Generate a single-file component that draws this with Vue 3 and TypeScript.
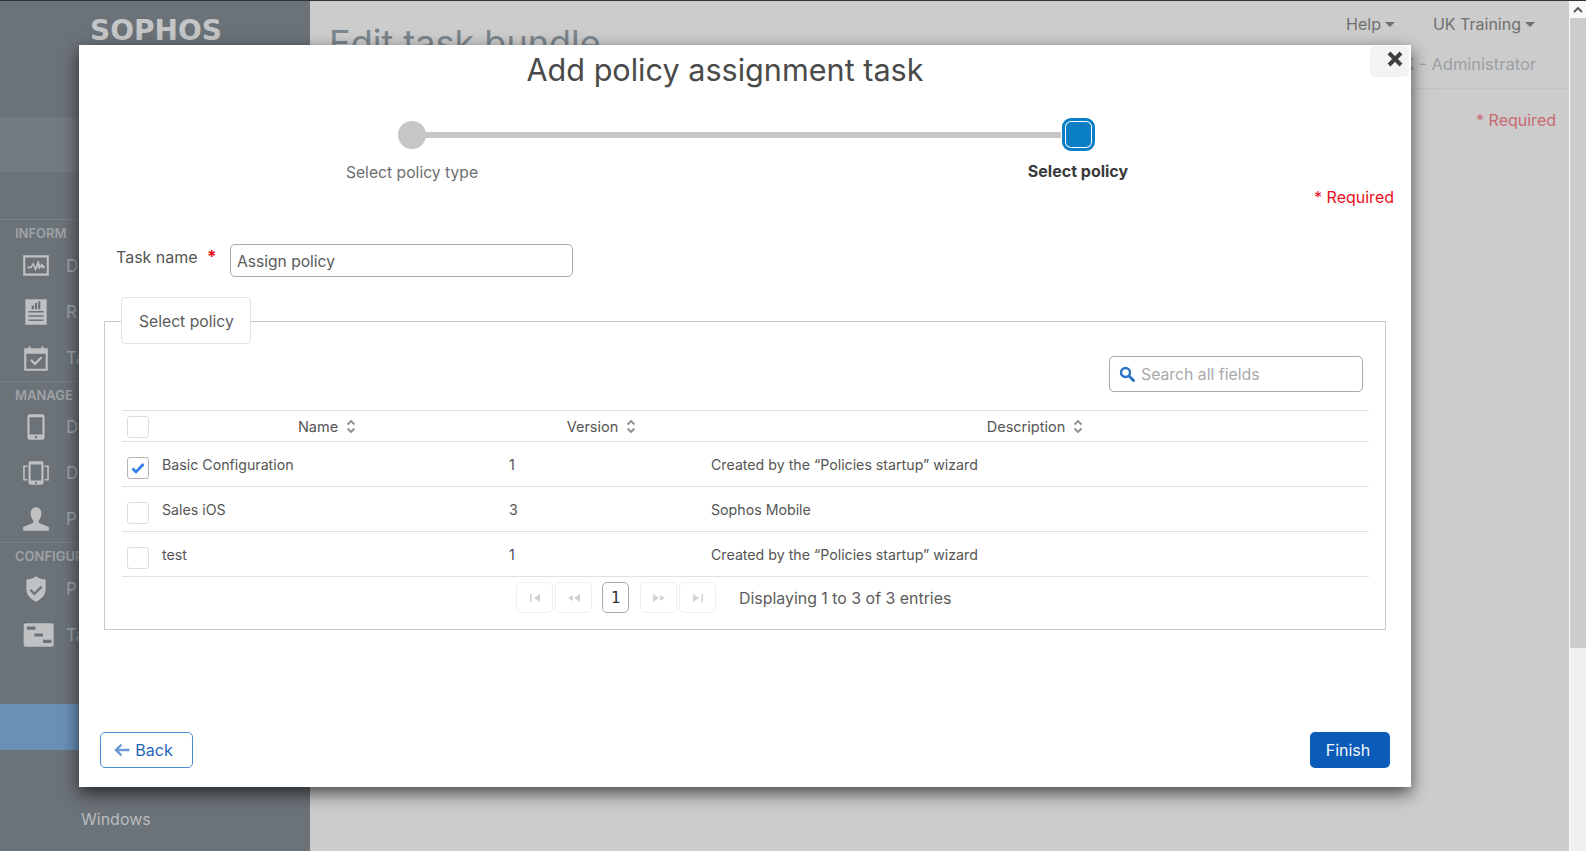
<script setup lang="ts">
// Sophos Mobile: "Add policy assignment task" wizard over the task bundle page
interface NavRow {
  label: string;
  icon: string;
}
interface NavSection {
  title: string;
  rows: NavRow[];
}
interface Policy {
  name: string;
  version: number;
  description: string;
  checked: boolean;
}

// labels only as far as they show from under the modal
const sections: NavSection[] = [
  {
    title: 'INFORM',
    rows: [
      { label: 'D', icon: 'M2 2h24v19H2zM4 4v15h20V4zM6 12.500h3l2.500-4 2 4.500 2.500-6.500 2 5 1.500-2 1.500 2H22V14h-2l-1-1.200-2.200 2.800-1.300-3.300L13.800 17 11 11.500 9.800 14H6z' },
      { label: 'R', icon: 'M4 0h20v24H4zM7 11v1.500h14V11zM7 15v1.500h14V15zM7 19v1.500h14V19zM10 6v3.500h2V6zM13 3.500v6h2v-6zM16 2v7.500h2V2z' },
      { label: 'Ta', icon: 'M3 3h4V1h2v2h10V1h2v2h4v21H3zM5 8v14h18V8zM8.500 14.500l1.500-1.500 3 3 5.500-5.500 1.500 1.500-7 7z' },
    ],
  },
  {
    title: 'MANAGE',
    rows: [
      { label: 'D', icon: 'M8 0h12a2 2 0 0 1 2 2v20a2 2 0 0 1-2 2H8a2 2 0 0 1-2-2V2a2 2 0 0 1 2-2zM8 3v16h12V3zM13 20.500v2h2v-2z' },
      { label: 'D', icon: 'M9 1h10a2 2 0 0 1 2 2v18a2 2 0 0 1-2 2H9a2 2 0 0 1-2-2V3a2 2 0 0 1 2-2zM9 4v15h10V4zM13 20.500v1.500h2v-1.500zM2 5h4v1.500H3.500v11H6V19H2zM22 5h4v14h-4v-1.500h2.500v-11H22z' },
      { label: 'P', icon: 'M14 1c3.300 0 5 2.500 5 5.500S17.500 13 16.500 13.500v2L26 19.500V23H2v-3.500l9.500-4v-2C10.500 13 9 9.500 9 6.500S10.700 1 14 1z' },
    ],
  },
  {
    title: 'CONFIGURE',
    rows: [
      { label: 'P', icon: 'M14 0c3 2 6 3 9 3v9c0 6-4 9.500-9 12C9 21.500 5 18 5 12V3c3 0 6-1 9-3zM9.500 12L8 13.500l4.500 4.500 7.500-7.500L18.500 9l-6 6z' },
      { label: 'Ta', icon: 'M4.500 1h24a2 2 0 0 1 2 2v18a2 2 0 0 1-2 2h-24a2 2 0 0 1-2-2V3a2 2 0 0 1 2-2zM5.500 4v3h8V4zM12.500 10.500v3h8v-3zM20.500 16.500v3h8v-3z' },
    ],
  },
];

const policies: Policy[] = [
  { name: 'Basic Configuration', version: 1, description: 'Created by the “Policies startup” wizard', checked: true },
  { name: 'Sales iOS', version: 3, description: 'Sophos Mobile', checked: false },
  { name: 'test', version: 1, description: 'Created by the “Policies startup” wizard', checked: false },
];

const columns = ['Name', 'Version', 'Description'];
</script>

<template>
  <div class="page">
    <aside class="sidebar">
      <div class="logo">SOPHOS</div>
      <div class="band"></div>
      <section v-for="s in sections" :key="s.title" class="nav-section">
        <div class="nav-title">{{ s.title }}</div>
        <div v-for="(r, i) in s.rows" :key="i" class="nav-row">
          <span class="nav-icon">
            <svg width="30" height="26" viewBox="0 0 28 24"><path :d="r.icon" fill="#bfc1c2" fill-rule="evenodd" /></svg>
          </span>
          <span>{{ r.label }}</span>
        </div>
      </section>
      <div class="nav-active"></div>
      <div class="nav-sub">Windows</div>
    </aside>

    <main class="main">
      <header class="main-head">
        <h1 class="page-title">Edit task bundle</h1>
        <div class="head-right">
          <nav class="top-menu">
            <span class="menu-item">Help<i class="caret"></i></span>
            <span class="menu-item">UK Training<i class="caret"></i></span>
          </nav>
          <div class="user-line">UK - Administrator</div>
        </div>
      </header>
      <div class="page-required">* Required</div>
    </main>

    <div class="scrollbar">
      <div class="scroll-btn">
        <svg width="10" height="7" viewBox="0 0 10 7"><path d="M1 6l4-4 4 4" fill="none" stroke="#555" stroke-width="1.800" /></svg>
      </div>
      <div class="scroll-thumb"></div>
    </div>

    <div class="modal">
      <button class="close-btn" type="button" aria-label="Close">
        <svg width="16" height="16" viewBox="0 0 16 16"><path d="M2 2l12 12M14 2L2 14" stroke="#404040" stroke-width="4" /></svg>
      </button>
      <h2 class="modal-title">Add policy assignment task</h2>

      <div class="track">
        <span class="step-dot"></span>
        <span class="step-line"></span>
        <span class="step-current"><span class="step-fill"></span></span>
      </div>
      <div class="step-labels">
        <span class="step-label">Select policy type</span>
        <span class="step-label active">Select policy</span>
      </div>

      <div class="required">* Required</div>

      <div class="task-row">
        <label class="task-label">Task name</label>
        <span class="task-star">*</span>
        <div class="text-input">Assign policy</div>
      </div>

      <div class="fieldset">
        <div class="legend">Select policy</div>
        <div class="search-row">
          <div class="search">
            <svg width="16" height="16" viewBox="0 0 16 16">
              <circle cx="6.500" cy="6.500" r="4.500" fill="none" stroke="#2f74c4" stroke-width="2.400" />
              <path d="M10 10l4.500 4.500" stroke="#2f74c4" stroke-width="3" stroke-linecap="round" />
            </svg>
            <span>Search all fields</span>
          </div>
        </div>

        <table class="grid">
          <colgroup>
            <col class="col-check" />
            <col class="col-name" />
            <col class="col-version" />
            <col />
          </colgroup>
          <thead>
            <tr>
              <th><span class="check"></span></th>
              <th v-for="c in columns" :key="c">
                <span class="th-inner">
                  {{ c }}
                  <svg width="10" height="15" viewBox="0 0 10 15">
                    <path d="M1.500 5.500L5 2l3.500 3.500M1.500 9.500L5 13l3.500-3.500" fill="none" stroke="#8e8e8e" stroke-width="1.800" />
                  </svg>
                </span>
              </th>
            </tr>
          </thead>
          <tbody>
            <tr v-for="p in policies" :key="p.name">
              <td>
                <span class="check" :class="{ on: p.checked }">
                  <svg v-if="p.checked" width="14" height="12" viewBox="0 0 14 12">
                    <path d="M1.500 6.500l3.500 3.500 7.500-8" fill="none" stroke="#2b7de9" stroke-width="2.600" />
                  </svg>
                </span>
              </td>
              <td>{{ p.name }}</td>
              <td class="version">{{ p.version }}</td>
              <td>{{ p.description }}</td>
            </tr>
          </tbody>
        </table>

        <div class="pager">
          <span class="pg wide"><svg width="14" height="8" viewBox="0 0 14 8"><path d="M2 0h1.500v8H2zM12 0v8L6 4z" fill="#d2d2d2" /></svg></span>
          <span class="pg wide"><svg width="16" height="8" viewBox="0 0 16 8"><path d="M14 0v8L8 4zM7 1v6L2 4z" fill="#d2d2d2" /></svg></span>
          <span class="pg current">1</span>
          <span class="pg wide"><svg width="16" height="8" viewBox="0 0 16 8"><path d="M2 0v8l6-4zM9 1v6l5-3z" fill="#d2d2d2" /></svg></span>
          <span class="pg wide"><svg width="14" height="8" viewBox="0 0 14 8"><path d="M2 0v8l6-4zM10.500 0H12v8h-1.500z" fill="#d2d2d2" /></svg></span>
          <span class="pager-text">Displaying 1 to 3 of 3 entries</span>
        </div>
      </div>

      <footer class="modal-foot">
        <button class="btn back" type="button">
          <svg width="16" height="14" viewBox="0 0 16 14"><path d="M7.500 1.500L2 7l5.500 5.500M2.500 7H15.500" fill="none" stroke="#6b9ad2" stroke-width="2.400" /></svg>
          Back
        </button>
        <button class="btn finish" type="button">Finish</button>
      </footer>
    </div>
  </div>
</template>

<style>
html,
body {
  margin: 0;
  overflow: hidden;
}
</style>

<style scoped>
.page {
  position: relative;
  display: flex;
  height: 850px;
  border-top: 1px solid #2e3236;
  overflow: hidden;
  font-family: Inter, 'Liberation Sans', sans-serif;
  color: #555;
}
.sidebar {
  flex: 0 0 310px;
  background: #6b7278;
  color: #9ea3a7;
  font-size: 17px;
  white-space: nowrap;
  overflow: hidden;
}
.logo {
  height: 44px;
  padding: 13px 0 0 90px;
  font: 700 28px/34px 'DejaVu Sans', sans-serif;
  color: #c3c5c6;
  margin-bottom: 59px;
}
.band {
  height: 55px;
  background: #72797f;
  margin-bottom: 47px;
}
.nav-section {
  border-top: 1px solid #777e84;
}
.nav-title {
  height: 22.500px;
  padding: 4px 0 0 15px;
  box-sizing: border-box;
  font-size: 13px;
  line-height: 19px;
  font-weight: 600;
  color: #9ea3a7;
}
.nav-row {
  display: flex;
  align-items: center;
  height: 46px;
}
.nav-icon {
  display: flex;
  width: 66px;
  justify-content: center;
  padding-left: 6px;
  box-sizing: border-box;
}
.nav-icon svg {
  overflow: visible;
}
.nav-active {
  height: 46px;
  margin-top: 46px;
  background: #6a90b8;
}
.nav-sub {
  margin-top: 58px;
  padding-left: 81px;
  color: #b9bcbe;
  font-size: 16px;
  line-height: 22px;
}
.main {
  flex: 1;
  background: #cccccc;
}
.main-head {
  display: flex;
  justify-content: space-between;
  height: 87px;
  padding: 0 33px 0 19px;
  border-bottom: 1px solid #c2c2c2;
}
.page-title {
  margin: 20px 0 0;
  font-size: 36px;
  line-height: 44px;
  font-weight: 400;
  color: #7b858c;
}
.head-right {
  display: flex;
  flex-direction: column;
  align-items: flex-end;
}
.top-menu {
  display: flex;
  gap: 38px;
  padding: 11px 1px 0 0;
  line-height: 24px;
  font-size: 16px;
  color: #6f6f6f;
}
.caret {
  display: inline-block;
  margin-left: 4px;
  vertical-align: 3px;
  border: 5px solid transparent;
  border-top-color: #6f6f6f;
  border-bottom: 0;
}
.user-line {
  margin-top: 16px;
  line-height: 24px;
  font-size: 16.500px;
  color: #9aa0a4;
}
.page-required {
  padding: 19px 13px 0 0;
  text-align: right;
  font-size: 16px;
  line-height: 24px;
  color: #c86a70;
}
.scrollbar {
  flex: 0 0 17px;
  background: #f0f0f0;
  border-left: 1px solid #f7f7f7;
  box-sizing: border-box;
}
.scroll-btn {
  display: flex;
  align-items: center;
  justify-content: center;
  height: 17px;
  background: #f8f8f8;
}
.scroll-thumb {
  height: 630px;
  background: #cdcdcd;
}
.modal {
  position: absolute;
  left: 79px;
  top: 44px;
  width: 1332px;
  height: 742px;
  display: flex;
  flex-direction: column;
  background: #fff;
  box-shadow: 0 6px 16px rgba(0, 0, 0, 0.65);
}
.close-btn {
  position: absolute;
  right: 2px;
  top: 1px;
  width: 39px;
  height: 31px;
  padding: 5px 6px 0 0;
  display: flex;
  justify-content: flex-end;
  border: 0;
  border-radius: 5px;
  background: #f2f3f5;
}
.modal-title {
  margin: 5px 0 0;
  padding-right: 40px;
  text-align: center;
  font-size: 30.600px;
  line-height: 40px;
  font-weight: 400;
  color: #4a4a4a;
}
.track {
  display: flex;
  align-items: center;
  margin: 28px 0 0 319px;
  width: 697px;
}
.step-dot {
  width: 28px;
  height: 28px;
  border-radius: 50%;
  background: #c6c6c6;
}
.step-line {
  flex: 1;
  height: 6px;
  margin-left: -1px;
  background: #c6c6c6;
}
.step-current {
  width: 33px;
  height: 33px;
  margin-left: 1px;
  padding: 1px;
  box-sizing: border-box;
  border: 3px solid #0a7fc6;
  border-radius: 9px;
  background: #fff;
}
.step-fill {
  display: block;
  height: 100%;
  border-radius: 5px;
  background: #0a7fc6;
}
.step-labels {
  display: flex;
  justify-content: space-between;
  width: 866px;
  margin: 7px 0 0 233px;
  font-size: 15.700px;
  line-height: 24px;
  color: #6e6e6e;
}
.step-label {
  width: 200px;
  text-align: center;
  padding-top: 3px;
}
.step-label.active {
  padding-top: 1px;
  font-size: 16px;
  font-weight: 700;
  color: #3a3a3a;
}
.required {
  margin: 0 17px 0 0;
  text-align: right;
  font-size: 16px;
  line-height: 24px;
  color: #e8101c;
}
.task-row {
  display: flex;
  margin: 35px 0 0 37px;
}
.task-label {
  width: 91px;
  font-size: 16px;
  line-height: 26px;
  color: #555;
}
.task-star {
  width: 23px;
  font-size: 17px;
  line-height: 26px;
  font-weight: 700;
  color: #e8101c;
}
.text-input {
  width: 343px;
  height: 33px;
  padding-left: 6px;
  box-sizing: border-box;
  border: 1.500px solid #aaa;
  border-radius: 5px;
  font-size: 15.600px;
  line-height: 33px;
  color: #5b5b5b;
}
.fieldset {
  position: relative;
  margin: 44px 0 0 25px;
  width: 1282px;
  height: 309px;
  box-sizing: border-box;
  padding: 34px 15px 0 17px;
  border: 1.500px solid #c9c9c9;
}
.legend {
  position: absolute;
  left: 16px;
  top: -25px;
  width: 130px;
  height: 47px;
  box-sizing: border-box;
  padding-left: 17px;
  border: 1px solid #e2e2e2;
  border-radius: 5px;
  background: #fff;
  font-size: 15.700px;
  line-height: 47px;
  color: #5b5b5b;
}
.search-row {
  display: flex;
  justify-content: flex-end;
  padding-right: 7px;
}
.search {
  display: flex;
  align-items: center;
  gap: 6px;
  width: 254px;
  height: 36px;
  padding-left: 9px;
  box-sizing: border-box;
  border: 1.500px solid #a8a8a8;
  border-radius: 5px;
  font-size: 15.800px;
  color: #a9a9a9;
}
.grid {
  width: 1247px;
  margin-top: 18px;
  border-collapse: collapse;
  table-layout: fixed;
  font-size: 14.200px;
  color: #555;
}
.col-check {
  width: 34px;
}
.col-name {
  width: 346px;
}
.col-version {
  width: 203px;
}
.grid th,
.grid td {
  box-sizing: border-box;
  border-top: 1.500px solid #e1e1e1;
  border-bottom: 1.500px solid #e1e1e1;
}
.grid th {
  height: 31px;
  font-size: 14.500px;
  font-weight: 400;
  text-align: center;
  padding: 0 4px 0 0;
}
.grid td {
  height: 45px;
  padding: 1px 0 0 6px;
}
.grid td.version {
  padding-left: 7px;
}
.grid th:first-child,
.grid td:first-child {
  padding: 0 0 0 5px;
  text-align: left;
}
.th-inner {
  display: inline-flex;
  align-items: center;
  gap: 8px;
}
.check {
  display: flex;
  align-items: center;
  justify-content: center;
  width: 22px;
  height: 22px;
  box-sizing: border-box;
  border: 1px solid #dcdcdc;
  border-radius: 3px;
}
.grid th .check {
  margin-top: 2px;
}
.grid td .check {
  margin-top: 7px;
}
.check.on {
  border: 1.500px solid #b5b5b5;
}
.pager {
  display: flex;
  align-items: center;
  margin: 5px 0 0 394px;
  gap: 2px;
}
.pg {
  display: flex;
  align-items: center;
  justify-content: center;
  height: 31px;
  box-sizing: border-box;
  border: 1px solid #efefef;
  border-radius: 5px;
}
.pg.wide {
  width: 37px;
}
.pg.current {
  width: 27px;
  margin: 0 9px 0 8px;
  border: 1.500px solid #a8a8a8;
  font-family: 'DejaVu Sans Mono', monospace;
  font-size: 16px;
  color: #333;
}
.pager-text {
  margin: 2px 0 0 21px;
  font-size: 15.900px;
  color: #5b5b5b;
}
.modal-foot {
  display: flex;
  justify-content: space-between;
  margin-top: auto;
  padding: 0 21px 19.500px;
}
.btn {
  display: flex;
  align-items: center;
  justify-content: center;
  height: 36px;
  box-sizing: border-box;
  border-radius: 5px;
  font-family: inherit;
  font-size: 16px;
}
.back {
  width: 93px;
  gap: 5px;
  padding: 0 6px 0 0;
  background: #fff;
  border: 1.500px solid #4a8ad2;
  color: #1f66b8;
}
.finish {
  width: 80px;
  padding: 0 4px 0 0;
  background: #0a5cb8;
  border: 0;
  color: #f4f7fb;
}
</style>
